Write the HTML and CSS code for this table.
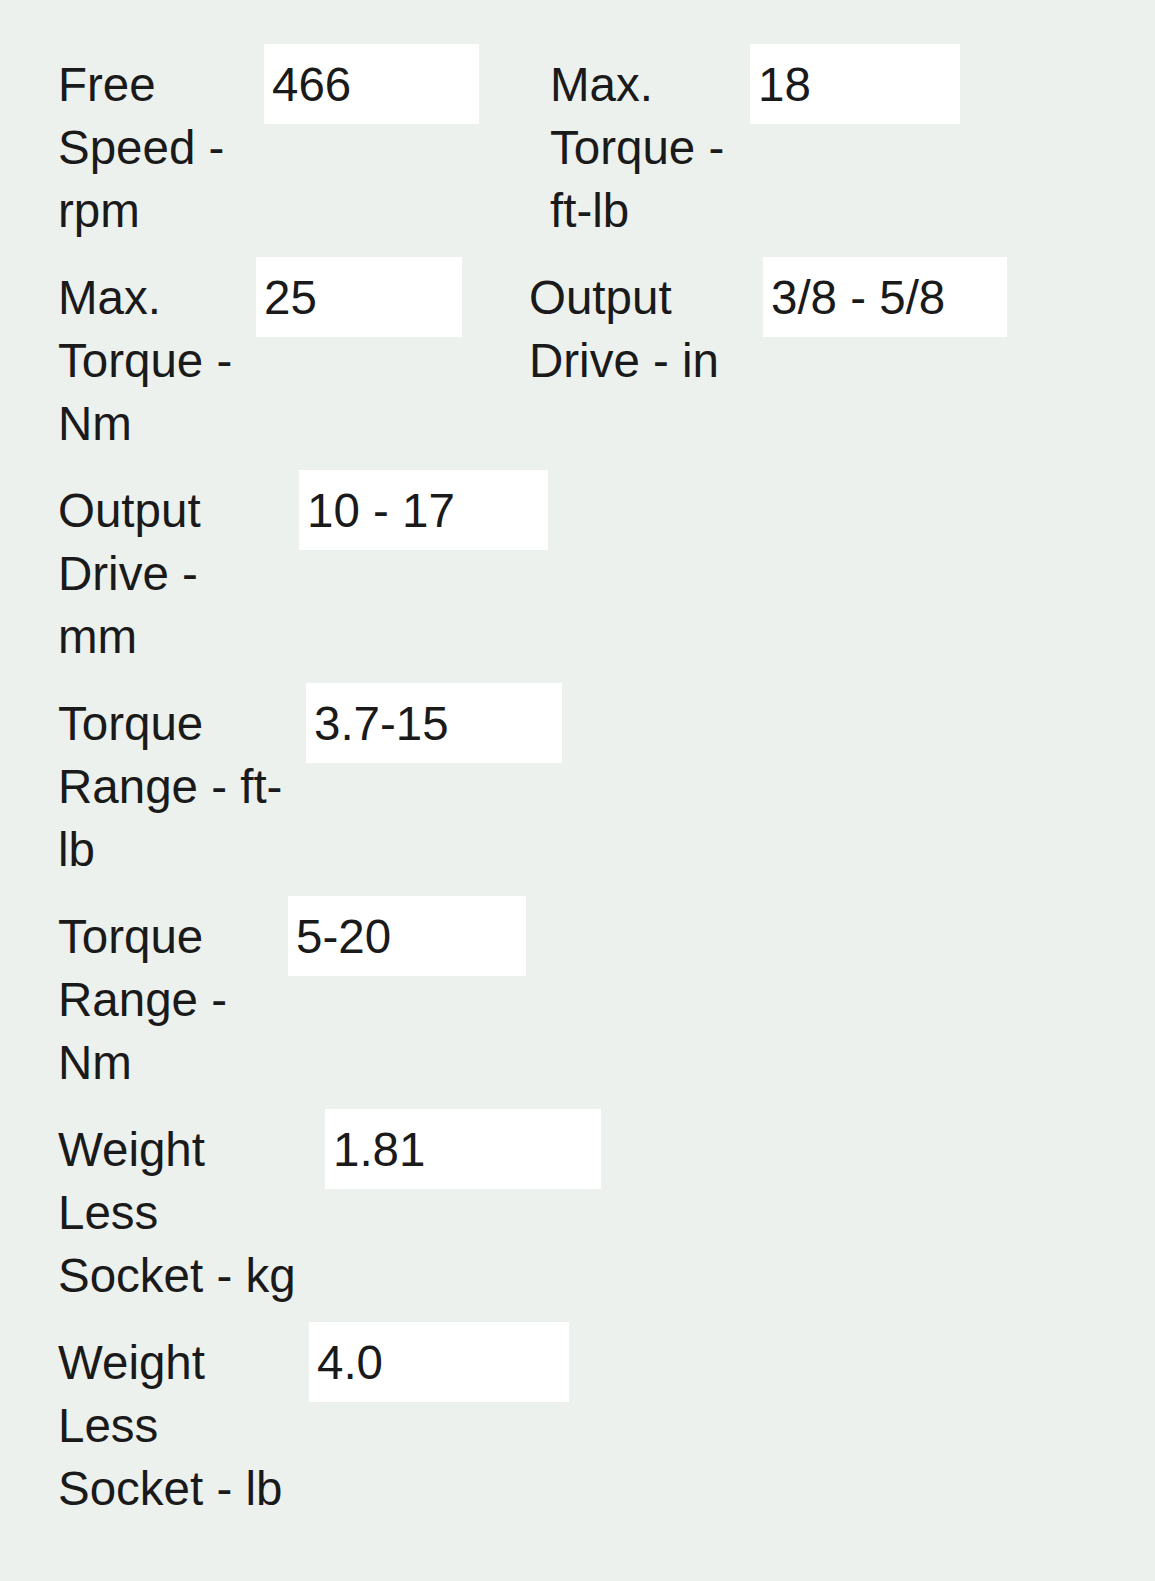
FILE: index.html
```html
<!DOCTYPE html>
<html lang="en">
<head>
<meta charset="utf-8">
<title>Specifications</title>
<link rel="stylesheet" href="styles.css">
</head>
<body>
<main class="spec-form">
  <div class="spec-row spec-row--first">
    <div class="spec-field f-speed">
      <label class="spec-label" for="speed">Free Speed - rpm</label>
      <input class="spec-input" id="speed" type="text" value="466" readonly>
    </div>
    <div class="spec-field f-torque-ftlb">
      <label class="spec-label" for="torque-ftlb">Max. Torque - ft-lb</label>
      <input class="spec-input" id="torque-ftlb" type="text" value="18" readonly>
    </div>
  </div>
  <div class="spec-row">
    <div class="spec-field f-torque-nm">
      <label class="spec-label" for="torque-nm">Max. Torque - Nm</label>
      <input class="spec-input" id="torque-nm" type="text" value="25" readonly>
    </div>
    <div class="spec-field f-drive-in">
      <label class="spec-label" for="drive-in">Output Drive - in</label>
      <input class="spec-input" id="drive-in" type="text" value="3/8 - 5/8" readonly>
    </div>
  </div>
  <div class="spec-row">
    <div class="spec-field f-drive-mm">
      <label class="spec-label" for="drive-mm">Output Drive - mm</label>
      <input class="spec-input" id="drive-mm" type="text" value="10 - 17" readonly>
    </div>
  </div>
  <div class="spec-row">
    <div class="spec-field f-range-ftlb">
      <label class="spec-label" for="range-ftlb">Torque Range - ft-lb</label>
      <input class="spec-input" id="range-ftlb" type="text" value="3.7-15" readonly>
    </div>
  </div>
  <div class="spec-row">
    <div class="spec-field f-range-nm">
      <label class="spec-label" for="range-nm">Torque Range - Nm</label>
      <input class="spec-input" id="range-nm" type="text" value="5-20" readonly>
    </div>
  </div>
  <div class="spec-row">
    <div class="spec-field f-weight-kg">
      <label class="spec-label" for="weight-kg">Weight Less Socket - kg</label>
      <input class="spec-input" id="weight-kg" type="text" value="1.81" readonly>
    </div>
  </div>
  <div class="spec-row">
    <div class="spec-field f-weight-lb">
      <label class="spec-label" for="weight-lb">Weight Less Socket - lb</label>
      <input class="spec-input" id="weight-lb" type="text" value="4.0" readonly>
    </div>
  </div>
</main>
</body>
</html>
```

FILE: styles.css
```css
html, body {
  margin: 0;
  padding: 0;
  background: #ecf1ee;
}

body {
  font-family: "Liberation Sans", Arial, sans-serif;
  color: #1a1a1a;
}

.spec-form {
  display: flex;
  flex-direction: column;
  row-gap: 15px;
  padding: 44px 0 40px 58px;
}

.spec-row {
  display: flex;
  align-items: flex-start;
  column-gap: 67px;
}

.spec-row--first {
  column-gap: 71px;
}

.spec-field {
  display: flex;
  align-items: baseline;
  column-gap: 12px;
}

.spec-label {
  display: block;
  font-size: 47.5px;
  line-height: 63px;
  flex: none;
}

.spec-input {
  flex: none;
  box-sizing: border-box;
  height: 80px;
  margin: 0;
  padding: 9px 8px 8px 8px;
  border: 0;
  outline: none;
  background: #fff;
  color: #1a1a1a;
  font-family: "Liberation Sans", Arial, sans-serif;
  font-size: 47.5px;
  line-height: 63px;
  border-radius: 0;
}

.f-speed .spec-label { width: 194px; }
.f-speed .spec-input { width: 215px; }

.f-torque-ftlb .spec-label { width: 188px; }
.f-torque-ftlb .spec-input { width: 210px; }

.f-torque-nm .spec-label { width: 186px; }
.f-torque-nm .spec-input { width: 206px; }

.f-drive-in .spec-label { width: 222px; }
.f-drive-in .spec-input { width: 244px; }

.f-drive-mm { column-gap: 16px; }
.f-drive-mm .spec-label { width: 225px; }
.f-drive-mm .spec-input { width: 249px; }

.f-range-ftlb .spec-label { width: 236px; }
.f-range-ftlb .spec-input { width: 256px; }

.f-range-nm .spec-label { width: 218px; }
.f-range-nm .spec-input { width: 238px; }

.f-weight-kg .spec-label { width: 255px; }
.f-weight-kg .spec-input { width: 276px; }

.f-weight-lb .spec-label { width: 239px; }
.f-weight-lb .spec-input { width: 260px; }
```
